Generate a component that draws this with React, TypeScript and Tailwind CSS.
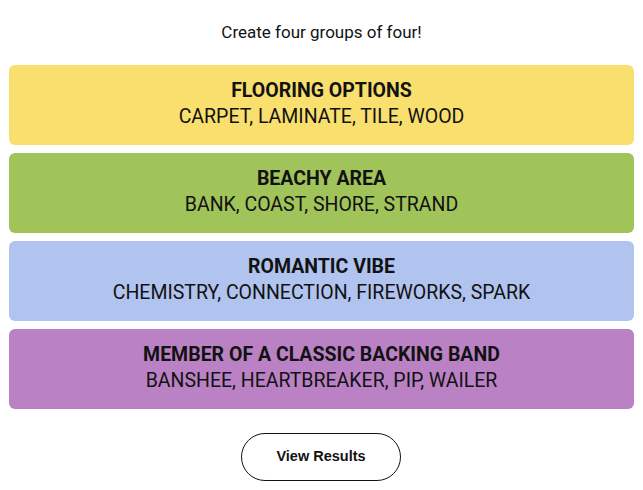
import React from 'react';

const groups = [
  { title: 'FLOORING OPTIONS', words: 'CARPET, LAMINATE, TILE, WOOD', color: 'bg-[#f9df6d]' },
  { title: 'BEACHY AREA', words: 'BANK, COAST, SHORE, STRAND', color: 'bg-[#a0c35a]' },
  { title: 'ROMANTIC VIBE', words: 'CHEMISTRY, CONNECTION, FIREWORKS, SPARK', color: 'bg-[#b0c4ef]' },
  { title: 'MEMBER OF A CLASSIC BACKING BAND', words: 'BANSHEE, HEARTBREAKER, PIP, WAILER', color: 'bg-[#ba81c5]' },
];

export default function App() {
  return (
    <div className="w-[643px] h-[490px] bg-white text-[#121212] font-['Roboto',sans-serif]">
      <p className="pt-[22px] text-center text-[17px] leading-5">Create four groups of four!</p>

      <div className="mt-[23px] px-[9px] flex flex-col gap-2">
        {groups.map((g) => (
          <div key={g.title} className={`${g.color} h-20 rounded-md flex flex-col items-center justify-center`}>
            <h3 className="text-[19.5px] font-bold leading-6 -mt-0.5">{g.title}</h3>
            <p className="text-[19.5px] leading-6 mt-0.5">{g.words}</p>
          </div>
        ))}
      </div>

      <div className="mt-6 flex justify-center">
        <button className="w-40 h-12 -ml-px rounded-full border border-[#121212] text-[14.5px] font-semibold font-['Liberation_Sans',sans-serif]">
          View Results
        </button>
      </div>
    </div>
  );
}
